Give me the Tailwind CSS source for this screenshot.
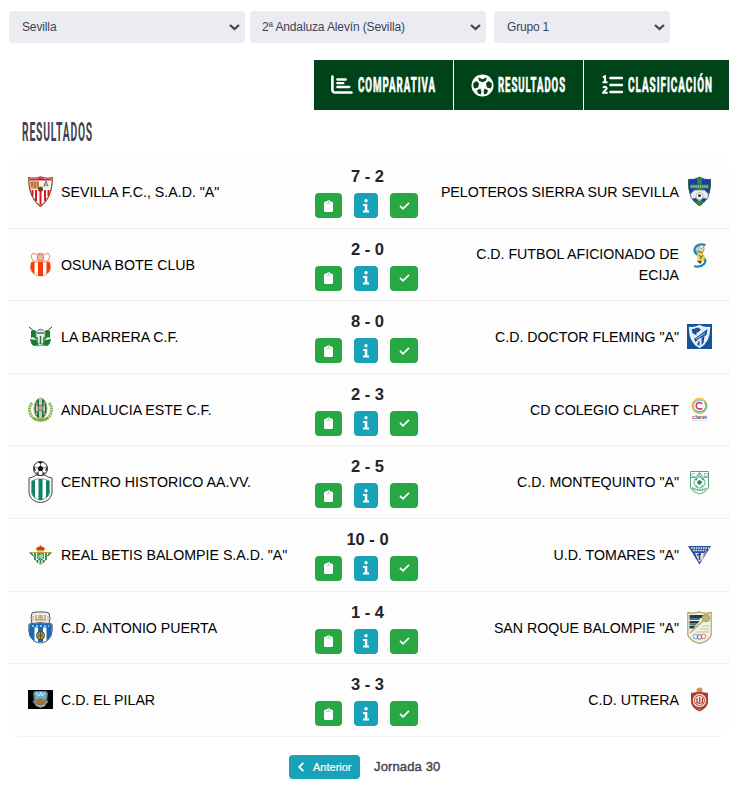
<!DOCTYPE html>
<html lang="es">
<head>
    <meta charset="UTF-8">
    <meta name="viewport" content="width=device-width, initial-scale=1.0">
    <title>Resultados</title>
    <script src="https://cdn.jsdelivr.net/npm/@tailwindcss/browser@4"></script>
    <style>
        body {
            font-family: 'Liberation Sans', Arial, sans-serif;
        }
    </style>
</head>
<body class="bg-white h-[787px] overflow-hidden px-[9px] pt-[11px]">
    <!-- Filters -->
    <div class="flex text-xs text-[#3f4254]">
        <div class="flex items-center justify-between w-[236px] h-8 rounded bg-[#ebecf2] pl-[13px] pr-[5px] mr-[5px]">
            <span class="tracking-[-0.13px]">Sevilla</span>
            <svg class="w-[11px] h-[7px]" viewBox="0 0 11 7" fill="none" stroke="#3f4254" stroke-width="2.2"><path d="M1 1l4.5 4L10 1"/></svg>
        </div>
        <div class="flex items-center justify-between w-[236px] h-8 rounded bg-[#ebecf2] pl-3 pr-[5px] mr-2">
            <span class="tracking-[-0.13px]">2ª Andaluza Alevín (Sevilla)</span>
            <svg class="w-[11px] h-[7px]" viewBox="0 0 11 7" fill="none" stroke="#3f4254" stroke-width="2.2"><path d="M1 1l4.5 4L10 1"/></svg>
        </div>
        <div class="flex items-center justify-between w-[176px] h-8 rounded bg-[#ebecf2] pl-[13px] pr-[5px]">
            <span class="tracking-[-0.2px]">Grupo 1</span>
            <svg class="w-[11px] h-[7px]" viewBox="0 0 11 7" fill="none" stroke="#3f4254" stroke-width="2.2"><path d="M1 1l4.5 4L10 1"/></svg>
        </div>
    </div>

    <!-- Tabs -->
    <nav class="flex justify-end mt-[17px] h-[50px] font-['Roboto',sans-serif] font-bold">
        <a class="flex items-center w-[139px] bg-[#004318] pl-[17px] mr-px">
            <svg class="w-[22px] h-5 mr-[5px]" viewBox="0 0 22 20" fill="none" stroke="#fff" stroke-linecap="round"><path d="M1.4 1.5v13.2q0 2.8 2.8 2.8h16.3" stroke-width="2.6"/><path d="M6.3 4.5h8.5M6.3 8.2h6M6.3 12h12" stroke-width="2.3"/></svg>
            <svg class="w-[84px] h-6" viewBox="0 0 84 24" fill="#fff" stroke="#fff" stroke-width=".7"><text x="0" y="19" font-size="20" letter-spacing="2" textLength="78" lengthAdjust="spacingAndGlyphs">COMPARATIVA</text></svg>
        </a>
        <a class="flex items-center w-[129px] bg-[#004318] pl-[17px] mr-px">
            <svg class="w-[23px] h-[23px] mr-1" viewBox="0 0 23 23">
                <circle cx="11.5" cy="11.5" r="11" fill="#fff"/>
                <path d="M7.2 3.3l4.3 1.9 4.3-1.9-.8 3.5-3.5 1.500-3.500-1.500zM2.400 9l3.300-2 2.300 2.600-.8 3.800-3.800 1.200L2.200 12zM20.600 9l-3.300-2L15 9.600l.8 3.800 3.800 1.200 1.200-2.600zM6 16.200l3.300-1.700 1.200 3.300-.8 2.700-2.700-1zM17 16.200l-3.300-1.700-1.200 3.300.8 2.700 2.700-1z" fill="#004318"/>
            </svg>
            <svg class="w-[74px] h-6" viewBox="0 0 74 24" fill="#fff" stroke="#fff" stroke-width=".7"><text x="0" y="19" font-size="20" letter-spacing="2" textLength="68" lengthAdjust="spacingAndGlyphs">RESULTADOS</text></svg>
        </a>
        <a class="flex items-center w-[145px] bg-[#004318] pl-[18px]">
            <svg class="w-[21px] h-5 mr-[5px]" viewBox="0 0 21 20" fill="none" stroke="#fff">
                <path d="M8.500 3h11.500M8.500 10h11.500M8.500 17h11.500" stroke-width="2.600" stroke-linecap="round"/>
                <path d="M.8 2.200L3 1.300v5.900M.6 7.300h4.900M1 12.800c1.500-1.700 3.900-.9 3.600.8-.2 1.200-3 2.600-3.500 4.200h4.600" stroke-width="2"/>
            </svg>
            <svg class="w-[91px] h-6" viewBox="0 0 91 24" fill="#fff" stroke="#fff" stroke-width=".7"><text x="0" y="19" font-size="20" letter-spacing="2" textLength="85" lengthAdjust="spacingAndGlyphs">CLASIFICACIÓN</text></svg>
        </a>
    </nav>

    <h1 class="pl-[13px] pt-[10px] h-[46px] font-['Roboto',sans-serif] font-bold">
        <svg class="w-[76px] h-6" viewBox="0 0 76 24" fill="#3f4254"><text x="0" y="21" font-size="25" letter-spacing="2" textLength="71" lengthAdjust="spacingAndGlyphs">RESULTADOS</text></svg>
    </h1>

    <!-- Matches -->
    <div id="matches" class="w-[720px] rounded-[14px] bg-[#fdfdfd] overflow-hidden"></div>

    <div class="flex items-center pl-[280px] mt-[18px]">
        <button class="flex items-center w-[71px] h-6 rounded bg-[#17a2b8] pl-[9px] text-[11px] text-white [-webkit-text-stroke:0.2px_#fff]">
            <svg class="w-[6px] h-[10px] mr-[9px]" viewBox="0 0 6 10" fill="none" stroke="#fff" stroke-width="1.800"><path d="M5.300.8L1.200 5l4.100 4.200"/></svg>
            Anterior
        </button>
        <span class="ml-[14px] text-[13px] tracking-[0.14px] text-[#3f4254] [-webkit-text-stroke:0.4px_#3f4254]">Jornada 30</span>
    </div>

    <script>
        // Crests are 25 units wide, h is their height
        const crests = {
            sevilla: { h: 31, svg: `<path d="M.7 1.500Q7 3 12.500.7 18 3 24.300 1.500q.5 19-11.800 29Q.2 20.500.7 1.500z" fill="#fff" stroke="#8e4b35" stroke-width="1.200"/><path d="M1.500 2.200Q7 4 12.500 1.500 18 4 23.500 2.200v2.300h-22z" fill="#d51f2b"/><path d="M2 5h9v8H2.500z" fill="#d9a55c"/><path d="M4 6v5M7 6v6M10 6v5" stroke="#8b4b2c"/><circle cx="18" cy="9" r="4" fill="#eee"/><path d="M16 11l2-6 2 5M16 8l4 2" stroke="#555" fill="none" stroke-width=".8"/><path d="M3 14h19q-2 9-9.500 15.500Q5 23 3 14z" fill="#fff"/><path d="M4.500 14v6M8 14v11M12.500 15v14M17 14v11M20.500 14v6" stroke="#d5162b" stroke-width="2"/><circle cx="12.500" cy="13" r="2.600" fill="#75401f"/>` },
            osuna: { h: 25, svg: `<path d="M5 1l3 1.500L12.500 1 17 2.500 20 1l2 3-2 5H5L3 4z" fill="#fff" stroke="#e88c78"/><circle cx="12.500" cy="5.500" r="3.300" fill="#f0b6a6" stroke="#d47764"/><path d="M3.500 10h18q2 6 0 10-3 4-9 4t-9-4q-2-4 0-10z" fill="#fff" stroke="#ef7b62" stroke-width=".7"/><path d="M3.500 10h3v12q-6-4-3-12zM10 10h5v14h-5zM18.500 10h3q3 8-3 12z" fill="#fa3b05"/>` },
            barrera: { h: 25, svg: `<path d="M1 3l6 5M24 3l-6 5" stroke="#333"/><path d="M3 7l4-1 3 4-1 6-4-3-2 1zM22 7l-4-1-3 4 1 6 4-3 2 1zM2 15l6 1 3 5-5 1q-3-1-4-7zM23 15l-6 1-3 5 5 1q3-1 4-7z" fill="#12812f"/><path d="M8 8q4.500-6 9 0v9q-4 6-9 0z" fill="#eee" stroke="#777" stroke-width=".7"/><path d="M9 9l7 0M9 13v6M12.500 12v8M16 13v6" stroke="#218039" stroke-width="1.500"/><path d="M8 22l9-1M10 6h5" stroke="#777" stroke-width=".8"/>` },
            andalucia: { h: 25, svg: `<path d="M4 6Q-1 12 4 20q4 3.500 8.500 3.500T21 20q5-8 0-14" fill="none" stroke="#8fb95a" stroke-width="3" stroke-dasharray="2 .6"/><ellipse cx="12.500" cy="11.500" rx="6.500" ry="10.500" fill="#17734f" stroke="#b9ad72" stroke-width=".7"/><path d="M11 1.500h3v20h-3zM8 9.500h9v4H8z" fill="#e2c48d"/><path d="M8.800 5v13M16.200 5v13" stroke="#e8edda" stroke-width=".7"/><circle cx="12.500" cy="11" r="2.600" fill="#aaa" stroke="#776b50"/><path d="M5 21q7 4 15 0" stroke="#76a842" stroke-width="2" fill="none"/>` },
            centro: { h: 42, svg: `<path d="M1 17l4-1 3-2h9l3 2 4 1v15q-2 9-11.500 9.500Q3 41 1 32z" fill="#fff" stroke="#444"/><path d="M3.500 20l5-2h8l5 2v12q-2 6-9 7-7-1-9-7z" fill="#fff" stroke="#51796c" stroke-width=".7"/><path d="M4 20l3-1v18q-3-2-3-6zM10.500 18h4v21h-4zM18 19l3 1v12q0 3-3 5z" fill="#0f8265"/><circle cx="12.500" cy="7.500" r="7" fill="#fff" stroke="#222"/><path d="M12.500 4.500l3 2.200-1.200 3.300h-3.600L9.500 6.700zM10 1h5l-2.500 2zM6 5v4l2 1zM19 5v4l-2 1zM8 12l3 2-1-3zM17 12l-3 2 1-3z" fill="#111"/><path d="M12.500 2v3M9.500 7L7 6M15.500 7L18 6M11 10l-2 3M14 10l2 3" stroke="#444" stroke-width=".7"/>` },
            betis: { h: 20, svg: `<path d="M1 7.500h23l-5 3.500q-1 6-6.500 8.500Q7 17 6 11z" fill="#fff" stroke="#c9a13c"/><path d="M3 8l2 2.500M7 8v7M10 8v3M15 8v3M18 8v7M22 8l-2 2.500M9.500 15v2.500M12.500 14.500v4M15.500 15v2.500" stroke="#16894a" stroke-width="1.700"/><circle cx="12.500" cy="11.500" r="3.300" fill="#d4e8c9" stroke="#299553"/><path d="M11 13.500v-4h2q2 1 0 2 2 1 0 2z" fill="none" stroke="#168447" stroke-width=".8"/><path d="M9 5.500Q7 2 11 2l1.500-1.500L14 2q4 0 2 3.500z" fill="#c9382e" stroke="#d49b36" stroke-width=".8"/><path d="M9 5.800h7" stroke="#d69a32" stroke-width="1.200"/>` },
            puerta: { h: 33, svg: `<path d="M4 2l4-1h9l4 1 1 5-1 6H4L3 7z" fill="#eee" stroke="#555"/><path d="M8 4v5h3V4M14 4v5h3V4M7 9h4M14 9h4" stroke="#c4a052" stroke-width="1.500" fill="none"/><path d="M5 5v5M20 5v5M12.500 4v6" stroke="#aaa"/><path d="M1 13q11-3 23 0 1 6-1 12-4 7-10.500 7T2 25Q0 19 1 13z" fill="#fff" stroke="#4a5a66"/><path d="M1.500 16.500h5V30Q-1 25 1.500 16.500zM10 16.500h5V31h-5zM18.500 16.500h5q1 9-5 13.500zM1.200 13.500q11-3 22.600 0v3H1.200z" fill="#1769b6"/><path d="M4 15h17" stroke="#d2e0e6" stroke-width="1.300" stroke-dasharray="2 2"/><circle cx="12.500" cy="24.500" r="4" fill="#d3a734" stroke="#443a20"/><path d="M10 23l5 3M15 23l-5 3M12.500 21v7" stroke="#4b3d1d" stroke-width=".8"/>` },
            pilar: { h: 19, svg: `<path d="M0 0h25v19H0z" fill="#020304"/><path d="M5 3l2-2h11l2 2-1 8q-2 5-6.500 7Q8 16 6 11z" fill="#777f87"/><path d="M7 2h11v5q-1 4-5.500 4T7 7z" fill="#67b2cd"/><path d="M8 3l3 3 2-4 1 4 3-3" stroke="#d7eef2" fill="none"/><path d="M5 11q3 3 4 5M20 11q-3 3-4 5" stroke="#aa9166" stroke-width="1.500"/><circle cx="12.500" cy="11.500" r="3.200" fill="#b16b25"/><path d="M8 15q4 3 9 0" stroke="#b5b1a5" fill="none" stroke-width="1.500"/>` },
            peloteros: { h: 31, svg: `<path d="M1.500 3.500Q8 4 12.500 1.200 17 4 23.500 3.500q1 20-11 26-12-6-11-26z" fill="#2033c4" stroke="#315b3d"/><path d="M10 2.500l2.500-1 2.500 1V29l-2.500 1-2.500-1zM3 8.500h19v4H3z" fill="#288c36"/><path d="M4 10.500h17" stroke="#a4c69d" stroke-width="2" stroke-dasharray="1.500 .7"/><path d="M3.500 18l4-4h10l4 4-1 5-4-1-4 3-4-3-4 1z" fill="#e9edf1" stroke="#778" stroke-width=".7"/><circle cx="12.500" cy="20" r="3.500" fill="#fff" stroke="#999" stroke-width=".7"/><path d="M12.500 18l1.500 1-.5 2h-2l-.5-2z" fill="#333"/><path d="M7 25q5 4 11 0" stroke="#288c36" fill="none" stroke-width="1.500"/>` },
            ecija: { h: 25, svg: `<path d="M18.500 2Q11 0 8 5q-2 5 5 8 8 3 4 8-4 4-10 2" fill="none" stroke="#1788c2" stroke-width="2.300"/><path d="M10 6l2-3 2 3 3-3v5l-3 2-5-1z" fill="#ddd5a5" stroke="#8b8d7b" stroke-width=".7"/><path d="M10 11l5-1 3 3-1 5-5 1-2-4z" fill="#ecd536"/><path d="M11 8l5 2M12 12l3 3M16 12l-3 4M10 18l3 1" stroke="#5d6255"/><circle cx="13" cy="19" r="1.500" fill="#444"/>` },
            fleming: { h: 25, svg: `<path d="M0 0h25v25H0z" fill="#14539c"/><path d="M2.500 3.500Q8 4 12.500 1.500 17 4 22.500 3.500q0 15-10 20-10-5-10-20z" fill="#e8eff6" stroke="#e9f1f7" stroke-width="1.300"/><path d="M4.500 5.500l6.500-2 3 2-3 3H9.500v3L5.500 9zM7 15L20.500 5l-1 6-8 4-3 3zM10.500 19l2-3v6l-2-1zM14.500 14l3-2-1 7-2 2z" fill="#14539c"/><path d="M9 15l9-6" stroke="#e8eff6" stroke-width=".8"/>` },
            claret: { h: 25, svg: `<circle cx="12.500" cy="9" r="7.300" fill="#fff" stroke="#f3c22f" stroke-width="1.700"/><path d="M17.500 5q3 4 0 8-5 4-9.500 0" fill="none" stroke="#48b9d8" stroke-width="1.500"/><path d="M7.500 12.500q-2.500-4 .5-7.500 4-3 8-1" fill="none" stroke="#79c3d4" stroke-width="1.200"/><path d="M15.300 6.800q-4.300-3-6 .8-1 5.400 6 4" fill="none" stroke="#d72e67" stroke-width="1.600"/><text x="5" y="21.500" font-size="6" font-weight="700" textLength="15" lengthAdjust="spacingAndGlyphs" fill="#555"><tspan fill="#d93155">c</tspan>laret</text><path d="M6 23.500h14" stroke="#b7c5b7" stroke-width=".7" stroke-dasharray="1 .5"/>` },
            montequinto: { h: 25, svg: `<path d="M3.500 1.500h18V18q-2 4-9 6-7-2-9-6z" fill="#fff" stroke="#55a878"/><path d="M3.500 7.500h5l4-5 4 5h5" stroke="#69b286" fill="none"/><circle cx="12.500" cy="12.500" r="5.500" fill="#fff" stroke="#61ae80"/><path d="M12.500 10l2.500 1.500-1 3h-3l-1-3zM8 9l3-1-2 3zM17 9l-3-1 2 3zM8 15l2 2 1-1zM17 15l-2 2-1-1z" fill="#278a53"/><path d="M5 18q8 4 15 0" stroke="#55a878" stroke-width="2" stroke-dasharray="1.200 .5" fill="none"/><text x="4" y="6.500" font-size="6" textLength="17" fill="#469d6b">C&amp;D</text>` },
            tomares: { h: 20, svg: `<path d="M1 1h23L12.500 19.500z" fill="#2a4d96"/><path d="M4 3h18M6 5.500h13" stroke="#e9eef6" stroke-width="1.300" stroke-dasharray="1.600 .8"/><path d="M8 8l9 0-1 6-4 3z" fill="#e1e5ec"/><path d="M12.500 8v7M10 10l4-1" stroke="#234886" stroke-width="1.500"/><path d="M16 12l2-5 2-1-7 12" fill="#cdbb54"/>` },
            sanroque: { h: 33, svg: `<path d="M.8 1.500Q7 3 12.500.8 18 3 24.200 1.500V24q-2 6-11.700 8.500Q3 30 .8 24z" fill="#f1f1ec" stroke="#b5aa69" stroke-width="1.300"/><path d="M2.500 4h14l-2 3h-12zM2.500 10h10l-2 2.500h-8zM2.500 15h6l-2 2.500h-4z" fill="#27365b"/><path d="M2.500 7h11l-1 2h-10zM2.500 12.500h8l-2 2h-6z" fill="#3b7b60"/><path d="M3 22L18 8" stroke="#b6a85d" stroke-width="1.300"/><circle cx="19" cy="7" r="3.700" fill="#c4b46c" stroke="#a89a56"/><path d="M16 15h6M13 18h9M10 21h12" stroke="#c9c49d" stroke-width="1.300" stroke-dasharray="1.500 .6"/><g fill="none" stroke-width=".9"><circle cx="8.500" cy="25.500" r="2.300" stroke="#7890bc"/><circle cx="12.500" cy="26" r="2.300" stroke="#667"/><circle cx="16.500" cy="25.500" r="2.300" stroke="#c66"/></g>` },
            utrera: { h: 25, svg: `<circle cx="12.500" cy="3.500" r="3" fill="#d78a57"/><path d="M4 6q8-2 17 0v10q-2 6-8.500 8.500Q6 22 4 16z" fill="#ad3b2e"/><circle cx="12.500" cy="13.500" r="6.800" fill="#f3dcd5"/><circle cx="12.500" cy="13.500" r="5" fill="#f8ece8" stroke="#b14a3d"/><path d="M10 11v5h2M12.800 10v7M15.500 11v5h-1.500" stroke="#a43328" fill="none" stroke-width="1.200"/><path d="M9 21.500l3.500 2.500 3.500-2.500" fill="#bd654a"/>` }
        };

        const matches = [
            ['sevilla', 'SEVILLA F.C., S.A.D. "A"', '7 - 2', 'PELOTEROS SIERRA SUR SEVILLA', 'peloteros'],
            ['osuna', 'OSUNA BOTE CLUB', '2 - 0', 'C.D. FUTBOL AFICIONADO DE ECIJA', 'ecija'],
            ['barrera', 'LA BARRERA C.F.', '8 - 0', 'C.D. DOCTOR FLEMING "A"', 'fleming'],
            ['andalucia', 'ANDALUCIA ESTE C.F.', '2 - 3', 'CD COLEGIO CLARET', 'claret'],
            ['centro', 'CENTRO HISTORICO AA.VV.', '2 - 5', 'C.D. MONTEQUINTO "A"', 'montequinto'],
            ['betis', 'REAL BETIS BALOMPIE S.A.D. "A"', '10 - 0', 'U.D. TOMARES "A"', 'tomares'],
            ['puerta', 'C.D. ANTONIO PUERTA', '1 - 4', 'SAN ROQUE BALOMPIE "A"', 'sanroque'],
            ['pilar', 'C.D. EL PILAR', '3 - 3', 'C.D. UTRERA', 'utrera']
        ];

        function crest(name, align) {
            const c = crests[name];
            return `<svg class="shrink-0 ${align}" width="25" height="${c.h}" viewBox="0 0 25 ${c.h}">${c.svg}</svg>`;
        }

        document.getElementById('matches').innerHTML = matches.map(([homeCrest, home, score, away, awayCrest]) => `
            <div class="flex h-[72.600px] border-b border-dotted border-[#e2e2e2] text-[14.2px] leading-[21px] text-black">
                <div class="flex items-center w-[296px] pl-[19px]">
                    ${crest(homeCrest, 'self-center')}
                    <span class="ml-2 pt-[1.4px] whitespace-nowrap">${home}</span>
                </div>
                <div class="w-[124px] pt-[9px]">
                    <div class="pl-[1px] text-center text-[16.5px] leading-[23px] font-bold text-[#212529]">${score}</div>
                    <div class="flex gap-3 pl-[10px] mt-[5px]">
                        <span class="flex items-center justify-center w-[27px] h-[25px] rounded bg-[#28a745]">
                            <svg class="w-[9px] h-3" viewBox="0 0 9 12"><path d="M3 1.500a1.500 1.500 0 0 1 3 0h1.500Q9 1.500 9 3v7.500Q9 12 7.500 12h-6Q0 12 0 10.500V3q0-1.500 1.500-1.500z" fill="#fff"/><circle cx="4.500" cy="1.800" r=".6" fill="#28a745"/><path d="M2.300 3.500h4.400" stroke="#28a745" stroke-width=".4"/></svg>
                        </span>
                        <span class="flex items-center justify-center w-6 h-[25px] rounded bg-[#17a2b8]">
                            <svg class="w-[6px] h-[14px]" viewBox="0 0 6 14" fill="#fff"><circle cx="3" cy="1.700" r="1.700"/><path d="M0 5h4.300v6.500H6v2H0v-2h1.800V7H0z"/></svg>
                        </span>
                        <span class="flex items-center justify-center w-7 h-[25px] rounded bg-[#28a745]">
                            <svg class="w-[11px] h-2" viewBox="0 0 11 8" fill="none" stroke="#fff" stroke-width="1.700"><path d="M1 3.800l3 3L10 .8"/></svg>
                        </span>
                    </div>
                </div>
                <div class="flex items-center justify-end w-[283px] text-right">
                    <div class="flex items-center">
                        <span class="mr-2 pt-[1.4px] max-w-[243px]">${away}</span>
                        ${crest(awayCrest, awayCrest === 'ecija' ? 'self-start' : 'self-center')}
                    </div>
                </div>
            </div>
        `).join('');
    </script>
</body>
</html>
